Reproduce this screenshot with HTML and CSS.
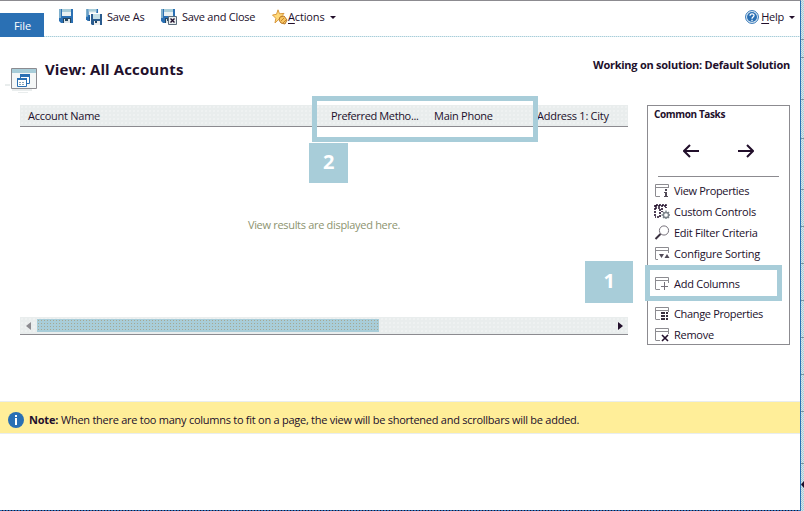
FILE: index.html
```html
<!DOCTYPE html>
<html lang="en">
<head>
<meta charset="utf-8">
<title>View: All Accounts</title>
<link rel="stylesheet" href="styles.css">
</head>
<body>
<svg class="defs" width="0" height="0">
  <defs>
    <g id="disk"><path d="M0 0h14v14H2l-2-2z" fill="#2a70b4"/><path d="M3 0h9v7H3z" fill="#e9f1f2"/><path d="M3 0h9v3H3z" fill="#a8cdd9"/><path d="M0 0h2v9H0z" fill="#7fb0cc"/><path d="M4 9h8v5H4z" fill="#244762"/><path d="M5 10h6v4H5z" fill="#dfe6ea"/><path d="M6 10h3v2H6z" fill="#244762"/></g>
    <g id="grid"><path d="M.5 12V.5h13V6M1 3.5h12M.5 12.5H5" fill="none" stroke="#8c8b90"/></g>
  </defs>
</svg>
<div class="app">
  <main class="window">
    <header class="toolbar">
      <div class="file">File</div>
      <svg class="save" width="14" height="14"><use href="#disk"/></svg>
      <div class="tool save-as"><svg width="16" height="16"><use href="#disk" transform="scale(.86)"/><path d="M4 4h12v12H6l-2-2z" fill="#fff"/><path d="M5 5h11v11H6l-1-1z" fill="#2a5b8e"/><path d="M7 5h7v5H7z" fill="#c5dfe7"/><path d="M8 12h6v4H8z" fill="#eee"/><path d="M9 12h2v2H9z" fill="#244762"/></svg><span>Save As</span></div>
      <div class="tool save-close"><svg width="16" height="16"><use href="#disk"/><path d="M7.500 7.500h8v8h-8z" fill="#e9eeee" stroke="#5a6b7a"/><path d="m9.500 9.500 4 4m0-4-4 4" stroke="#220f2b" stroke-width="1.4"/></svg><span>Save and Close</span></div>
      <div class="tool actions"><svg width="16" height="16"><path d="m6 .8 1.5 4 4.5-.4-3 3.500 2 4.200-4.200-1.800L3 14l.8-4.700L.5 6l4-.7z" fill="#ffd979" stroke="#d99a40"/><path d="m8 8 4-1 3 4-2 4-4-1-2-3z" fill="#f8c663" stroke="#b87828"/><path d="m9 12 3-3m-1 5 3-3" stroke="#c7872d"/></svg><span><u>A</u>ctions</span><i class="caret"></i></div>
      <div class="tool help"><svg width="14" height="14"><circle cx="7" cy="7" r="6.4" fill="#eef5f9" stroke="#2a70b4"/><circle cx="7" cy="7" r="5" fill="#2a70b4"/><path d="M5 5.700C5 3.200 9.200 3.300 9 5.500 8.900 7 7 7 7 8.700M7 9.700v1.500" fill="none" stroke="#fff" stroke-width="1.3"/></svg><span><u>H</u>elp</span><i class="caret"></i></div>
    </header>
    <section class="heading">
      <svg class="view-icon" width="32" height="28"><path d="M0 17h5v2H0zM7 22h20v2H7zM13 25h10v1H13z" fill="#e9eded"/><path d="M6.500 1.500h25v20h-25z" fill="#f5f7f7"/><path d="M6 2h26v4H6z" fill="#a8cdd9"/><path d="M6.500 1.500h25v20h-25z" fill="none" stroke="#8c8b90"/><path d="M15.500 7.500h9v9h-9z" fill="#fff" stroke="#2a70b4"/><path d="M15 7h10v3H15z" fill="#2a70b4"/><path d="M12.500 11.500h9v8h-9z" fill="#fff" stroke="#2a70b4"/><path d="M12 11h10v2H12z" fill="#2a70b4"/><path d="M14 15.500h6M14 17.500h6" stroke="#8ba7b8" stroke-dasharray="2 1"/></svg>
      <h1>View: All Accounts</h1>
      <div class="solution">Working on solution: Default Solution</div>
    </section>
    <section class="content">
      <div class="results">
        <div class="columns"><span>Account Name</span><span class="method">Preferred Metho...</span><span>Main Phone</span><span>Address 1: City</span></div>
        <div class="empty">View results are displayed here.</div>
        <div class="scrollbar"><svg class="left" width="5" height="8"><path d="M5 0v8L0 4z" fill="#8c8b90"/></svg><div class="thumb"></div><svg class="right" width="5" height="8"><path d="M0 0v8l5-4z" fill="#220f2b"/></svg></div>
        <div class="frame column-frame"></div><div class="badge badge-two">2</div><div class="badge badge-one">1</div>
      </div>
      <aside class="tasks">
        <h2>Common Tasks</h2>
        <div class="arrows"><svg width="16" height="14"><path d="M16 7H1M7 1 1 7l6 6" fill="none" stroke="#220f2b" stroke-width="2"/></svg><svg width="16" height="14"><path d="M0 7h15M9 1l6 6-6 6" fill="none" stroke="#220f2b" stroke-width="2"/></svg></div>
        <div class="task"><svg width="16" height="15"><use href="#grid" x="1" y="1"/><path d="M9 5h6v9H9z" fill="#fff"/><path d="M11 6h2v2h-2zM10 9h3v4h1v1h-4v-1h1v-3h-1z" fill="#514a57"/></svg><span class="t-view">View Properties</span></div>
        <div class="task"><svg width="16" height="15"><path d="M1 12V1h11v3M1 4h5v9H1m7-9v4M1 2h11" fill="none" stroke="#220f2b" stroke-width="1.600" stroke-dasharray="2 1"/><circle cx="12" cy="11" r="2.600" fill="#fff" stroke="#7d858c" stroke-width="1.500"/><path d="M12 6.500v2m0 5v2M7.500 11h2m5 0h1.500M9 8l1 1m4 4 1 1m0-6-1 1m-4 4-1 1" stroke="#7d858c" stroke-width="1.400"/></svg><span class="t-custom">Custom Controls</span></div>
        <div class="task"><svg width="16" height="15"><circle cx="10" cy="5.500" r="4.600" fill="none" stroke="#77727b"/><path d="m6.500 9-5 5" stroke="#39303f" stroke-width="2"/></svg><span class="t-edit">Edit Filter Criteria</span></div>
        <div class="task"><svg width="16" height="15"><use href="#grid" x="1" y="1"/><path d="M4 7h12v7H4z" fill="#fff"/><path d="M5 8h5l-2.500 4zM10.500 12h5L13 8z" fill="#514a57"/></svg><span class="t-sort">Configure Sorting</span></div>
        <div class="task selected"><svg width="16" height="15"><use href="#grid" x="1" y="1"/><path d="M10.500 6v8M7 10.500h7" stroke="#77727b"/></svg><span class="t-add">Add Columns</span></div>
        <div class="task"><svg width="16" height="15"><use href="#grid" x="1" y="1"/><path d="M7 6h8v9H7z" fill="#fff"/><path d="M7 7h8M7 10h8M7 13h8" stroke="#39303f" stroke-width="1.800" stroke-dasharray="4 1 2 1"/></svg><span class="t-change">Change Properties</span></div>
        <div class="task"><svg width="16" height="15"><use href="#grid" x="1" y="1"/><path d="M7 7h8v8H7z" fill="#fff"/><path d="m8 8 6 6m0-6-6 6" stroke="#220f2b" stroke-width="1.600"/></svg><span class="t-remove">Remove</span></div>
        <div class="frame task-frame"></div>
      </aside>
    </section>
    <footer class="note"><svg width="16" height="16"><circle cx="8" cy="8" r="8" fill="#2a70b4"/><path d="M7 3h2v2H7zM7 6h2v7H7z" fill="#fff"/></svg><b>Note:</b><span>When there are too many columns to fit on a page, the view will be shortened and scrollbars will be added.</span></footer>
  </main>
  <div class="edge"><svg width="3" height="511"><path d="M0 39.500h3M0 57.500h3M0 99.500h3M0 138.500h3M0 189.500h3M0 226.500h3M0 263.500h3M0 300.500h3M0 337.500h3M0 374.500h3M0 411.500h3M0 463.500h3" stroke="#7896a2"/><path d="m3 481-3 3.500 3 3.500z" fill="#220f2b"/></svg></div>
</div>
</body>
</html>
```
FILE: styles.css
```css
* { box-sizing: border-box; }
body { margin: 0; width: 804px; height: 511px; overflow: hidden; background: #fff; color: #220f2b; font: 11px/16px "Open Sans", "Noto Sans", sans-serif; letter-spacing: -.26px; }
svg { display: block; flex: none; }
.defs { position: absolute; }
.app { display: flex; height: 511px; }
.window { width: 801px; border-top: 1px solid #8c8b90; border-right: 1px solid #2a70b4; display: flex; flex-direction: column; position: relative; }
.window::after { content: ""; position: absolute; bottom: 0; left: 0; right: 0; height: 1px; background: repeating-linear-gradient(90deg, #2a70b4 0 2px, #220f2b 2px 3px); }
.edge { width: 3px; background: repeating-conic-gradient(#a8cdd9 0 25%, #d7e5e9 0 50%) 0 0 / 2px 2px; }
.toolbar { height: 36px; display: flex; align-items: flex-start; background: repeating-linear-gradient(90deg, #a8cdd9 0 1px, #dcecf1 1px 2px) 0 35px / 100% 1px no-repeat; }
.file { width: 44px; height: 24px; margin-top: 12px; padding: 5px 0 0 14px; background: #2a70b4; color: #fff; letter-spacing: -.1px; }
.save { margin: 8px 0 0 15px; }
.tool { display: flex; gap: 5px; height: 16px; margin-top: 8px; line-height: 16px; white-space: nowrap; }
.save-as { margin-left: 13px; width: 75px; letter-spacing: -.18px; }
.save-close { width: 111px; }
.actions { gap: 0; letter-spacing: -.15px; }
.help { margin: 9px 5px 0 auto; gap: 2px; line-height: 14px; }
u { text-underline-offset: 2px; }
.caret { width: 0; height: 0; border: 3px solid transparent; border-top-color: #220f2b; border-bottom: 0; margin: 7px 0 0 5px; }
.help .caret { margin: 6px 0 0 3px; }
.heading { height: 68px; display: flex; align-items: flex-start; }
.view-icon { margin: 30px 0 0 5px; }
h1 { margin: 21px 0 0 8px; font-size: 15px; line-height: 22px; font-weight: 700; letter-spacing: .12px; }
.solution { margin: 20px 10px 0 auto; font-weight: 700; letter-spacing: -.25px; }
.content { height: 296px; display: flex; gap: 19px; padding-left: 20px; }
.results { width: 608px; height: 230px; position: relative; display: flex; flex-direction: column; }
.columns { height: 22px; display: grid; grid-template-columns: 303px 103px 103px 99px; align-items: center; background: radial-gradient(circle, #fbfcfc 0 .5px, #e9eded .8px) 0 0 / 4px 4px; border-bottom: 1px solid #8c8b90; }
.columns span { padding-left: 8px; }
.columns span:nth-child(n+2) { background: linear-gradient(#cbd2d4, #cbd2d4) -1px 3px / 1px 12px no-repeat; }
.columns .method { letter-spacing: -.36px; }
.empty { height: 190px; padding: 90px 0 0; text-align: center; color: #8d946f; letter-spacing: -.31px; }
.scrollbar { height: 18px; display: flex; align-items: center; background: radial-gradient(circle, #fbfcfc 0 .5px, #e9eded .8px) 0 0 / 4px 4px; border-bottom: 1px solid #8c8b90; }
.left { margin-left: 6px; }
.thumb { width: 342px; height: 13px; margin-left: 6px; background: radial-gradient(circle, #a5a793 0 .6px, transparent .8px) 0 0 / 3px 3px, #a8cdd9; }
.right { margin-left: auto; margin-right: 5px; }
.frame { position: absolute; border: 5px solid #a8cdd9; }
.column-frame { left: 292px; top: -9px; width: 226px; height: 46px; }
.badge { position: absolute; display: grid; place-items: center; padding-bottom: 2px; background: #a8cdd9; color: #fff; font-size: 20px; font-weight: 700; line-height: 24px; }
.badge-two { left: 289px; top: 38px; width: 39px; height: 40px; }
.badge-one { left: 565px; top: 156px; width: 48px; height: 42px; }
.tasks { width: 143px; height: 240px; border: 1px solid #8c8b90; position: relative; }
h2 { margin: 0 0 0 6px; font-size: 10px; line-height: 16px; letter-spacing: -.38px; }
.arrows { height: 55px; margin: 0 10px 3px; padding: 22px 25px 0; display: flex; justify-content: space-between; border-bottom: 1px solid #8c8b90; }
.task { height: 21px; display: flex; align-items: center; gap: 4px; padding-left: 6px; }
.task.selected { height: 39px; }
.t-view, .t-change { letter-spacing: -.34px; }
.t-sort { letter-spacing: -.21px; }
.task-frame { left: -3px; top: 159px; width: 137px; height: 36px; }
.note { height: 33px; display: flex; align-items: center; padding: 4px 0 0 8px; background: #ffee99; border: 1px solid #e9eded; border-width: 1px 0; }
.note b { margin-left: 5px; width: 32px; letter-spacing: -.2px; }
```
